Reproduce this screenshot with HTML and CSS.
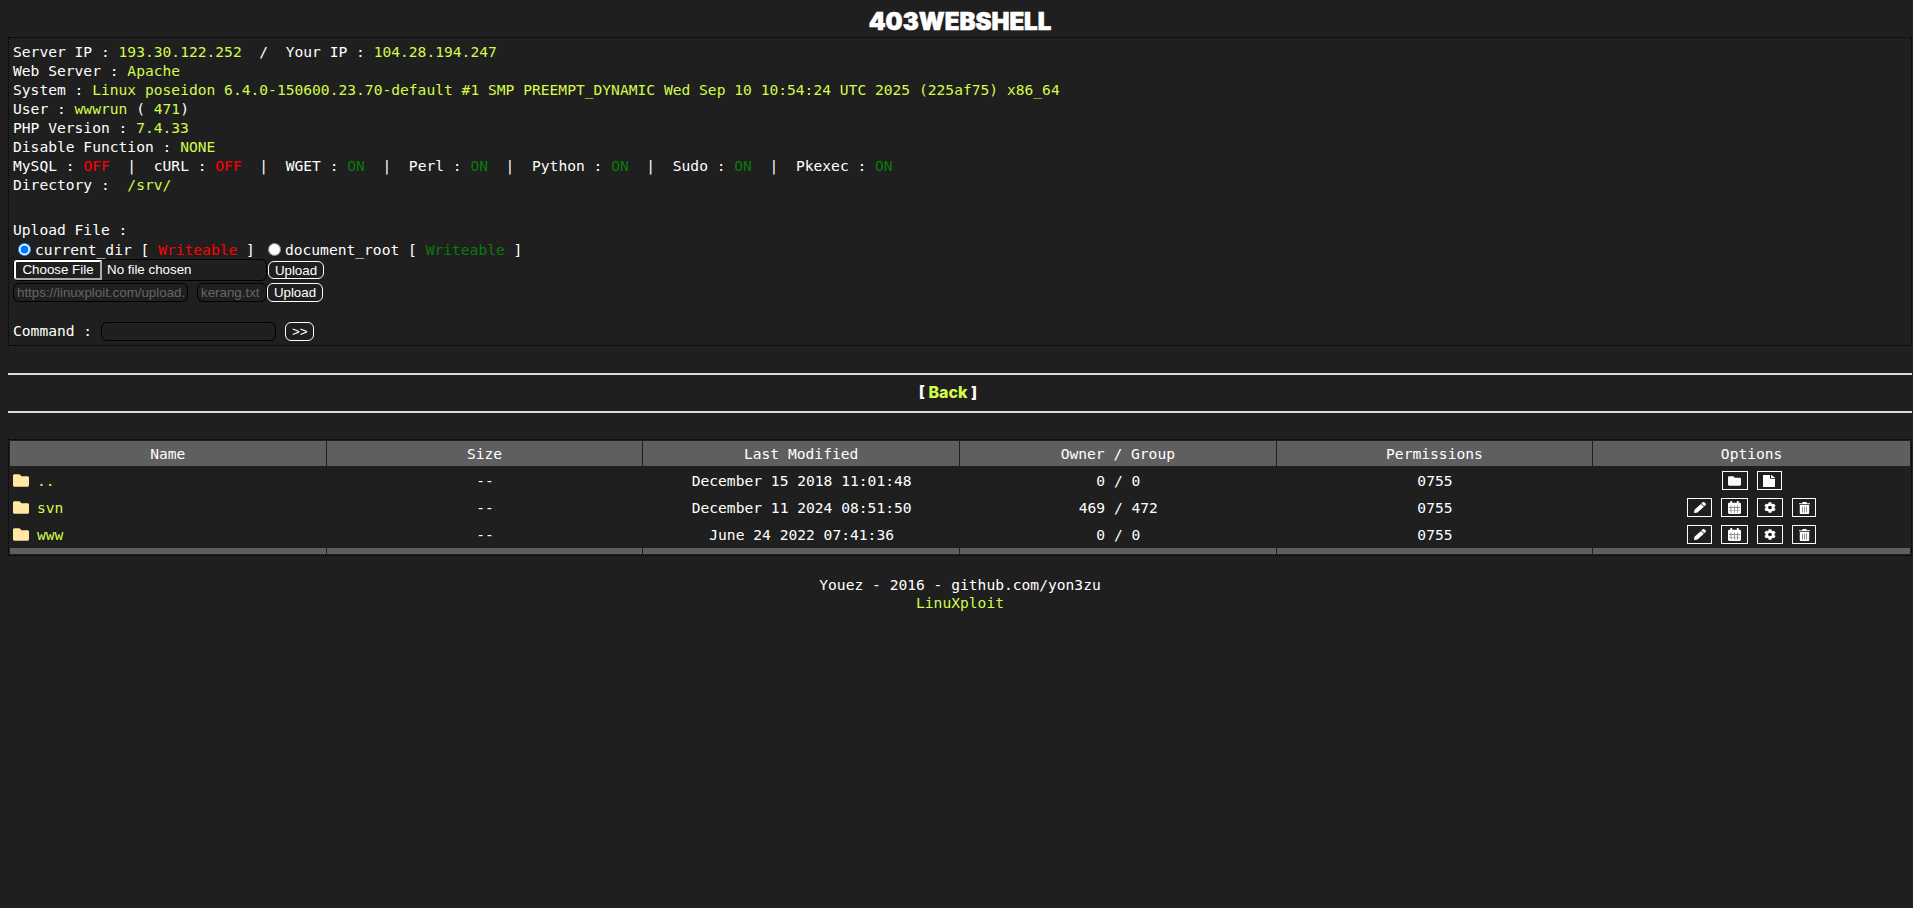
FILE: index.html
```html
<!DOCTYPE html>
<html lang="en">
<head>
<meta charset="utf-8">
<title>403WebShell</title>
<link rel="stylesheet" href="styles.css">
</head>
<body>
<svg class="defs" width="0" height="0" aria-hidden="true">
  <defs>
    <symbol id="i-folder" viewBox="0 56 512 400" preserveAspectRatio="none"><path d="M464 128H272l-64-64H48C21.500 64 0 85.500 0 112v288c0 26.500 21.500 48 48 48h416c26.500 0 48-21.500 48-48V176c0-26.500-21.500-48-48-48z"/></symbol>
    <symbol id="i-file" viewBox="0 0 384 512" preserveAspectRatio="none"><path d="M224 136V0H24C10.700 0 0 10.700 0 24v464c0 13.300 10.700 24 24 24h336c13.300 0 24-10.700 24-24V160H248c-13.200 0-24-10.800-24-24zm160-14.100v6.100H256V0h6.100c6.400 0 12.500 2.500 17 7l97.900 98c4.500 4.500 7 10.600 7 16.900z"/></symbol>
    <symbol id="i-pencil" viewBox="0 0 512 512" preserveAspectRatio="none"><path d="M497.900 142.100l-46.100 46.100c-4.700 4.700-12.300 4.700-17 0l-111-111c-4.700-4.700-4.700-12.300 0-17l46.100-46.100c18.700-18.700 49.100-18.700 67.900 0l60.100 60.100c18.800 18.700 18.800 49.100 0 67.900zM284.200 99.800L21.600 362.400.4 483.900c-2.900 16.400 11.400 30.600 27.800 27.800l121.500-21.300 262.600-262.600c4.700-4.700 4.700-12.300 0-17l-111-111c-4.800-4.700-12.400-4.700-17.100 0z"/></symbol>
    <symbol id="i-cal" viewBox="0 0 448 512" preserveAspectRatio="none"><path fill-rule="evenodd" d="M96 0h32c9 0 16 7 16 16v48h160V16c0-9 7-16 16-16h32c9 0 16 7 16 16v48h32c26.500 0 48 21.500 48 48v352c0 26.500-21.500 48-48 48H48c-26.500 0-48-21.500-48-48V112c0-26.500 21.500-48 48-48h32V16c0-9 7-16 16-16zM96 176v288h16V176zm112 0v288h16V176zm112 0v288h16V176zM32 256v16h384v-16zm0 96v16h384v-16z"/></symbol>
    <symbol id="i-cog" viewBox="0 0 512 512" preserveAspectRatio="none"><path d="M487.400 315.700l-42.600-24.600c4.300-23.200 4.300-47 0-70.200l42.600-24.600c4.900-2.800 7.100-8.600 5.500-14-11.100-35.600-30-67.800-54.700-94.600-3.800-4.100-10-5.100-14.800-2.300L380.800 110c-17.900-15.400-38.500-27.300-60.800-35.100V25.800c0-5.600-3.900-10.500-9.400-11.700-36.700-8.200-74.300-7.800-109.200 0-5.500 1.200-9.400 6.100-9.400 11.700V75c-22.200 7.900-42.800 19.800-60.800 35.100L88.700 85.500c-4.900-2.800-11-1.900-14.800 2.300-24.700 26.700-43.600 58.900-54.700 94.600-1.700 5.400.6 11.200 5.500 14L67.300 221c-4.300 23.200-4.300 47 0 70.200l-42.600 24.600c-4.900 2.800-7.100 8.600-5.500 14 11.100 35.600 30 67.800 54.700 94.600 3.800 4.100 10 5.100 14.800 2.300l42.600-24.600c17.900 15.400 38.500 27.300 60.800 35.100v49.200c0 5.600 3.900 10.500 9.400 11.700 36.700 8.200 74.300 7.800 109.200 0 5.500-1.200 9.400-6.100 9.400-11.700v-49.200c22.200-7.900 42.800-19.800 60.800-35.100l42.600 24.600c4.900 2.800 11 1.900 14.800-2.300 24.700-26.700 43.600-58.900 54.700-94.600 1.500-5.500-.7-11.300-5.600-14.100zM256 336c-44.100 0-80-35.900-80-80s35.900-80 80-80 80 35.900 80 80-35.900 80-80 80z"/></symbol>
    <symbol id="i-trash" viewBox="0 0 448 512" preserveAspectRatio="none"><path fill-rule="evenodd" d="M32 128h384v336c0 26.500-21.500 48-48 48H80c-26.500 0-48-21.500-48-48zM128 192v256h20V192zm86 0v256h20V192zm86 0v256h20V192zM432 48H320l-16-34C300 5 292 0 282 0H166c-10 0-18 5-22 14l-16 34H16C7 48 0 55 0 64v32h448V64c0-9-7-16-16-16z"/></symbol>
  </defs>
</svg>

<h1 class="title">403WebShell</h1>

<div class="panel">
  <div class="info">
    <div>Server IP : <span class="val">193.30.122.252</span>&nbsp; /&nbsp; Your IP : <span class="val">104.28.194.247</span></div>
    <div>Web Server : <span class="val">Apache</span></div>
    <div>System : <span class="val">Linux poseidon 6.4.0-150600.23.70-default #1 SMP PREEMPT_DYNAMIC Wed Sep 10 10:54:24 UTC 2025 (225af75) x86_64</span></div>
    <div>User : <span class="val">wwwrun</span> ( <span class="val">471</span>)</div>
    <div>PHP Version : <span class="val">7.4.33</span></div>
    <div>Disable Function : <span class="val">NONE</span></div>
    <div>MySQL : <span class="off">OFF</span>&nbsp; |&nbsp; cURL : <span class="off">OFF</span>&nbsp; |&nbsp; WGET : <span class="on">ON</span>&nbsp; |&nbsp; Perl : <span class="on">ON</span>&nbsp; |&nbsp; Python : <span class="on">ON</span>&nbsp; |&nbsp; Sudo : <span class="on">ON</span>&nbsp; |&nbsp; Pkexec : <span class="on">ON</span></div>
    <div>Directory :&nbsp; <span class="val">/srv/</span></div>
  </div>
  <form class="upload">
    <div>Upload File :</div>
    <div class="radios">
      <label class="radio"><input type="radio" name="t" checked><span>current_dir [ <span class="off">Writeable</span> ]</span></label>
      <label class="radio"><input type="radio" name="t"><span>document_root [ <span class="on">Writeable</span> ]</span></label>
    </div>
    <div class="row file-row">
      <span class="file"><span class="file-btn">Choose File</span><span class="file-name">No file chosen</span></span>
      <button type="button" class="btn up-1">Upload</button>
    </div>
    <div class="row url-row">
      <input class="field url" type="text" placeholder="https://linuxploit.com/upload.txt">
      <input class="field name" type="text" placeholder="kerang.txt">
      <button type="button" class="btn">Upload</button>
    </div>
    <div class="cmd">
      <span class="cmd-label">Command :</span>
      <input class="field cmd-in" type="text">
      <button type="button" class="btn go">&gt;&gt;</button>
    </div>
  </form>
</div>

<hr class="rule rule-top">
<div class="back">[ <a href="#">Back</a> ]</div>
<hr class="rule rule-bottom">

<table class="files">
  <thead>
    <tr><th>Name</th><th>Size</th><th>Last Modified</th><th>Owner / Group</th><th>Permissions</th><th>Options</th></tr>
  </thead>
  <tbody>
    <tr>
      <td class="name-cell"><svg class="ico-folder"><use href="#i-folder"/></svg><a href="#">..</a></td>
      <td>--</td><td>December 15 2018 11:01:48</td><td>0 / 0</td><td>0755</td>
      <td><span class="opts"><span class="opt"><svg class="s-folder"><use href="#i-folder"/></svg></span><span class="opt"><svg class="s-file"><use href="#i-file"/></svg></span></span></td>
    </tr>
    <tr>
      <td class="name-cell"><svg class="ico-folder"><use href="#i-folder"/></svg><a href="#">svn</a></td>
      <td>--</td><td>December 11 2024 08:51:50</td><td>469 / 472</td><td>0755</td>
      <td><span class="opts"><span class="opt"><svg class="s-pencil"><use href="#i-pencil"/></svg></span><span class="opt"><svg class="s-cal"><use href="#i-cal"/></svg></span><span class="opt"><svg class="s-cog"><use href="#i-cog"/></svg></span><span class="opt"><svg class="s-trash"><use href="#i-trash"/></svg></span></span></td>
    </tr>
    <tr>
      <td class="name-cell"><svg class="ico-folder"><use href="#i-folder"/></svg><a href="#">www</a></td>
      <td>--</td><td>June 24 2022 07:41:36</td><td>0 / 0</td><td>0755</td>
      <td><span class="opts"><span class="opt"><svg class="s-pencil"><use href="#i-pencil"/></svg></span><span class="opt"><svg class="s-cal"><use href="#i-cal"/></svg></span><span class="opt"><svg class="s-cog"><use href="#i-cog"/></svg></span><span class="opt"><svg class="s-trash"><use href="#i-trash"/></svg></span></span></td>
    </tr>
  </tbody>
  <tfoot><tr><td></td><td></td><td></td><td></td><td></td><td></td></tr></tfoot>
</table>

<footer class="foot">
  <div>Youez - 2016 - github.com/yon3zu</div>
  <a href="#">LinuXploit</a>
</footer>
</body>
</html>
```
FILE: styles.css
```css
html, body { margin: 0; padding: 0; }
body {
  background: #1f1f1f;
  color: #fff;
  font-family: "DejaVu Sans Mono", monospace;
  font-size: 14.62px;
  padding: 0 1px 0 8px;
  height: 908px;
  box-sizing: border-box;
  overflow: hidden;
}
.defs { position: absolute; }
.title {
  margin: 0;
  height: 37px;
  padding-top: 8px;
  box-sizing: border-box;
  text-align: center;
  font-family: "Inter", sans-serif;
  font-weight: 900;
  font-size: 24px;
  line-height: 27px;
  text-transform: uppercase;
  letter-spacing: 0;
  -webkit-text-stroke: 0.6px #fff;
}
.panel {
  border: 1px dotted #000;
  padding: 4px 4px 0;
  height: 309px;
  box-sizing: border-box;
  line-height: 19px;
}
.val { color: #d4fb4a; }
.off { color: #f00; }
.on { color: #0a7a0a; }
.upload { margin-top: 26px; }
.radios { display: flex; gap: 13px; padding-left: 5px; height: 20px; }
.radio { display: flex; align-items: center; }
.radio input { margin: 0 4px 0 0; width: 13px; height: 13px; accent-color: #0075ff; }
.row { display: flex; align-items: flex-start; font-family: "Liberation Sans", sans-serif; font-size: 13.33px; line-height: normal; }
.file-row { height: 22px; }
.file {
  display: flex;
  align-items: flex-end;
  width: 254px;
  height: 22px;
  border-radius: 6px;
  border: 1px solid #000;
  box-sizing: border-box;
}
.file-btn {
  border: 2px solid;
  border-color: #fff #aaa #aaa #fff;
  height: 20px;
  line-height: 16px;
  width: 88px;
  text-align: center;
  box-sizing: border-box;
  margin-right: 5px;
  border-radius: 3px 0 0 3px;
  color: #fff;
  background: #1f1f1f;
}
.file-name { color: #fff; line-height: 20px; }
.btn {
  background: #1f1f1f;
  color: #fff;
  border: 1px solid #fff;
  border-radius: 6px;
  font-family: "Liberation Sans", sans-serif;
  font-size: 13.33px;
  height: 19px;
  width: 56px;
  padding: 0;
  margin: 0;
  line-height: 15px;
}
.up-1 { margin: 2px 0 0 1px; height: 18px; }
.field {
  background: #1f1f1f;
  color: #fff;
  border: 1px solid #000;
  border-radius: 6px;
  height: 19px;
  box-sizing: border-box;
  padding: 0 3px;
  font-family: "Liberation Sans", sans-serif;
  font-size: 13.33px;
  margin: 0;
}
.field::placeholder { color: #666; opacity: 1; }
.url-row { height: 19px; margin-top: 2px; }
.url { width: 175px; margin-right: 9px; }
.name { width: 70px; }
.cmd { display: flex; align-items: center; margin-top: 20px; height: 19px; }
.cmd-label { line-height: 17px; margin-bottom: 2px; }
.cmd-in { width: 175px; margin-left: 9px; margin-right: 9px; }
.go { height: 19px; width: 29px; }
.rule {
  border: 0;
  height: 2px;
  background: #dcdcdc;
  margin: 0;
}
.rule-top { margin-top: 27px; }
.back {
  height: 36px;
  line-height: 34px;
  text-align: center;
  padding-right: 24px;
  font-family: "Inter", sans-serif;
  font-weight: 800;
  font-size: 16px;
}
.back a { color: #d4fb4a; text-decoration: none; }
.files {
  margin-top: 26px;
  width: 100%;
  border-collapse: separate;
  border-spacing: 0;
  border: 1px dotted #000;
  table-layout: fixed;
  padding: 1px;
}
.files th {
  background: #5f5f5f;
  background-clip: padding-box;
  font-weight: 400;
  height: 26px;
  box-sizing: border-box;
  padding: 0;
  border-right: 1px solid #1f1f1f;
  border-bottom: 1px solid #1f1f1f;
}
.files th:last-child, .files tfoot td:last-child { border-right: 0; }
.files td {
  height: 27px;
  padding: 0;
  text-align: center;
}
.files tfoot td {
  height: 6px;
  background: #5f5f5f;
  background-clip: padding-box;
  border-right: 1px solid #1f1f1f;
  box-sizing: border-box;
}
.name-cell.name-cell { text-align: left; padding-left: 3px; }
.name-cell a { color: #d4fb4a; text-decoration: none; }
.ico-folder { width: 16px; height: 13px; fill: #ffe8a1; vertical-align: -1px; margin-right: 8px; }
.opts { display: inline-flex; gap: 9px; justify-content: center; vertical-align: middle; }
.opt {
  display: flex;
  align-items: center;
  justify-content: center;
  padding: 0 5.5px;
  height: 19px;
  border: 1px solid #fff;
  box-sizing: border-box;
}
.opt svg { fill: #fff; display: block; }
.s-folder { width: 13px; height: 10px; }
.s-file { width: 12px; height: 12px; }
.s-pencil { width: 12px; height: 11px; }
.s-cal { width: 13px; height: 13px; margin: 0 0.5px; }
.s-cog { width: 12px; height: 11px; margin: 0 0.5px; }
.s-trash { width: 11px; height: 12px; }
.foot { margin-top: 20px; text-align: center; line-height: 18px; }
.foot a { color: #d4fb4a; text-decoration: none; }
```
